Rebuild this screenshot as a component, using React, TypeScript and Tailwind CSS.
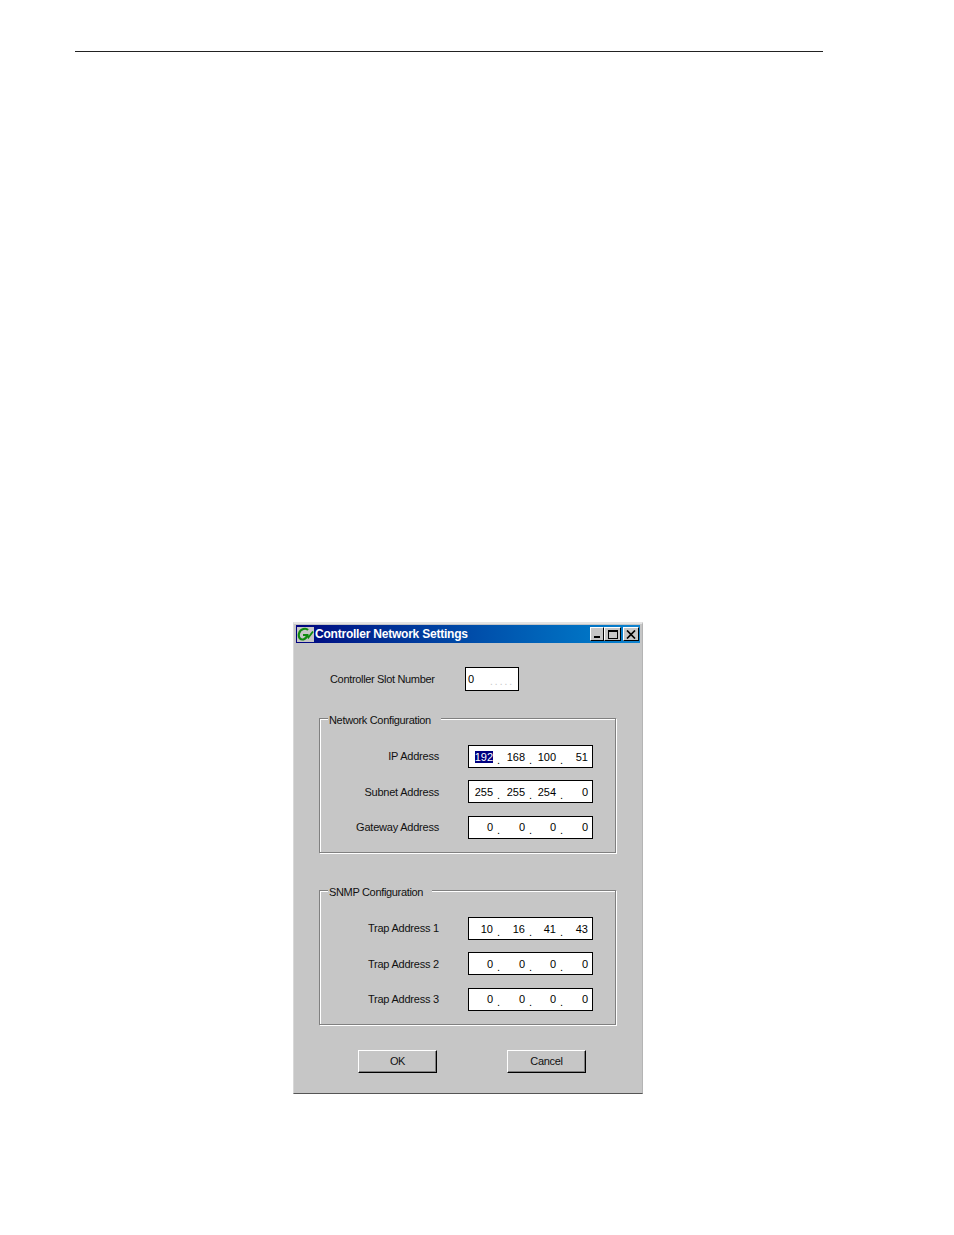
const font = "font-['Liberation_Sans',Arial,sans-serif]";
const label = "text-[11px] tracking-[-0.33px] text-[#111]";

function Octets({ values, selected }: { values: string[]; selected?: boolean }) {
  const widths = ["w-[24px]", "w-[25px]", "w-[24px]", "w-[25px]"];
  return (
    <div className="w-[125px] h-[23px] border border-black bg-white flex items-center text-[11px] leading-[14px] text-black opacity-[0.999]">
      {values.map((v, i) => (
        <div key={i} className="flex items-center">
          <div className={`${widths[i]} text-right`}>
            {selected && i === 0 ? <span className="bg-[#000080] text-white">{v}</span> : v}
          </div>
          {i < 3 && <div className="w-[7px] pl-[4px] text-center pt-[6px] text-[11px] leading-[12px]">.</div>}
        </div>
      ))}
    </div>
  );
}

function Row({ label: text, values, selected }: { label: string; values: string[]; selected?: boolean }) {
  return (
    <div className="flex items-center h-[23px]">
      <div className="w-[119px] text-right text-[11px] tracking-[-0.22px] text-[#111]">{text}</div>
      <div className="ml-[29px]">
        <Octets values={values} selected={selected} />
      </div>
    </div>
  );
}

function Group({ title, legendW, rows }: { title: string; legendW: string; rows: { label: string; values: string[]; selected?: boolean }[] }) {
  return (
    <div className="relative w-[297px] h-[135px] ml-[23px] border border-[#808080] shadow-[1px_1px_0_#ffffff,inset_1px_1px_0_#ffffff] pt-[26px] flex flex-col gap-[12.4px]">
      <div className={`absolute left-[8px] top-[-8px] h-[18px] pt-[2px] ${legendW} bg-[#c6c6c6] pl-px leading-[14px] whitespace-nowrap ${label}`}>
        {title}
      </div>
      {rows.map((r) => (
        <Row key={r.label} {...r} />
      ))}
    </div>
  );
}

function WinButton({ children, w }: { children: React.ReactNode; w: string }) {
  return (
    <div className={`${w} h-[14px] bg-[#c6c6c6] border-t border-l border-t-white border-l-white border-r border-b border-r-black border-b-black flex items-center justify-center`}>
      {children}
    </div>
  );
}

function Button({ text }: { text: string }) {
  return (
    <div className={`w-[79px] h-[23px] bg-[#c6c6c6] border-t border-l border-t-white border-l-white border-r border-b border-r-black border-b-black shadow-[inset_-1px_-1px_0_#808080] flex items-center justify-center ${label}`}>
      {text}
    </div>
  );
}

export default function App() {
  return (
    <div className={`w-[954px] h-[1235px] bg-white pt-[51px] overflow-hidden ${font}`}>
      <div className="ml-[75px] w-[748px] h-px bg-[#222]" />
      <div className="ml-[293px] mt-[570px] w-[350px] h-[472px] bg-[#c6c6c6] border-t-2 border-t-[#e4e4e4] border-l border-l-[#d8d8d8] border-r border-r-[#b4b4b4] border-b border-b-[#555] pt-px pl-[2px] flex flex-col">
        <div className="w-[344px] h-[18px] bg-gradient-to-r from-[#000080] to-[#1084d0] flex items-center">
          <div className="w-[17px] h-[15px] ml-px bg-[#c6c6c6] flex items-center justify-center">
            <svg width="17" height="15" viewBox="0 0 17 15" fill="none">
              <path d="M11 3 C9 0.8 3.5 1.5 2 6.5 C1 10.5 3.5 13 6.5 12.4 C9 11.8 9.8 9.8 10.2 8 L6 8" stroke="#108a10" strokeWidth="2.2" />
              <path d="M10.2 8 L11.4 10.5 L16 4.5" stroke="#108a10" strokeWidth="1.8" />
            </svg>
          </div>
          <div className="ml-px text-white font-bold text-[12px] tracking-[-0.22px] whitespace-nowrap pb-px">
            Controller Network Settings
          </div>
          <div className="ml-auto flex items-center mr-px">
            <WinButton w="w-[14px]">
              <div className="w-[6px] h-[2px] bg-black mt-[6px] mr-px" />
            </WinButton>
            <WinButton w="w-[17px]">
              <div className="w-[10px] h-[9px] border border-black border-t-2" />
            </WinButton>
            <div className="ml-[2px]">
              <WinButton w="w-[16px]">
                <svg width="10" height="9" viewBox="0 0 10 9">
                  <path d="M1 0.5 L9 8.5 M9 0.5 L1 8.5" stroke="#000" strokeWidth="1.7" />
                </svg>
              </WinButton>
            </div>
          </div>
        </div>

        <div className="flex items-center mt-[24px] h-[24px]">
          <div className={`ml-[34px] w-[135px] ${label}`}>Controller Slot Number</div>
          <div className="w-[54px] h-[24px] border border-black bg-white flex items-center pl-[2px] pt-px text-[11px] text-black relative opacity-[0.999]">
            0
            <div className="absolute right-[4px] bottom-[5px] text-[10px] leading-[6px] tracking-[2px] text-[#c6c6c6]">.....</div>
          </div>
        </div>

        <div className="mt-[27px]">
          <Group
            title="Network Configuration"
            legendW="w-[113px]"
            rows={[
              { label: "IP Address", values: ["192", "168", "100", "51"], selected: true },
              { label: "Subnet Address", values: ["255", "255", "254", "0"] },
              { label: "Gateway Address", values: ["0", "0", "0", "0"] },
            ]}
          />
        </div>
        <div className="mt-[37px]">
          <Group
            title="SNMP Configuration"
            legendW="w-[104px]"
            rows={[
              { label: "Trap Address 1", values: ["10", "16", "41", "43"] },
              { label: "Trap Address 2", values: ["0", "0", "0", "0"] },
              { label: "Trap Address 3", values: ["0", "0", "0", "0"] },
            ]}
          />
        </div>
        <div className="mt-[25px] ml-[62px] flex gap-[70px]">
          <Button text="OK" />
          <Button text="Cancel" />
        </div>
      </div>
    </div>
  );
}
